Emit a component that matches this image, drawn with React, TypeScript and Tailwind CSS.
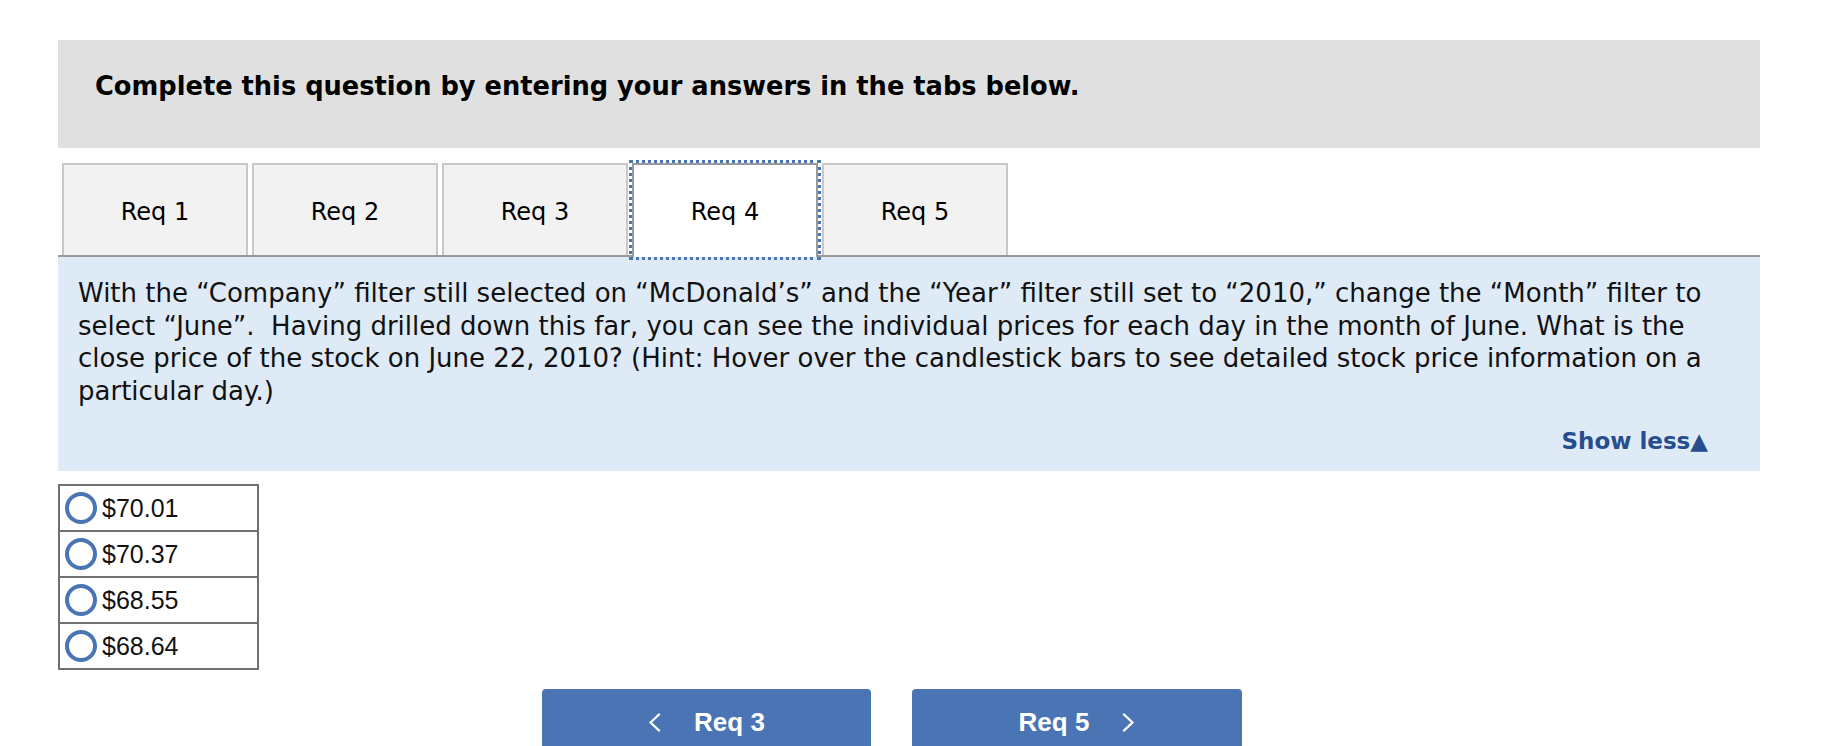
import React from "react";

const verdana = { fontFamily: '"DejaVu Sans", Verdana, sans-serif' };
const arial = { fontFamily: '"Liberation Sans", Arial, sans-serif' };

function Chevron({ dir }: { dir: "left" | "right" }) {
  return (
    <svg width="13" height="19" viewBox="0 0 13 19" className="shrink-0">
      <polyline
        points={dir === "left" ? "11,1.5 2.5,9.5 11,17.5" : "2,1.5 10.5,9.5 2,17.5"}
        fill="none"
        stroke="white"
        strokeWidth="2.4"
        strokeLinecap="round"
        strokeLinejoin="round"
      />
    </svg>
  );
}

export default function App() {
  const tabs = ["Req 1", "Req 2", "Req 3", "Req 4", "Req 5"];
  const options = ["$70.01", "$70.37", "$68.55", "$68.64"];
  return (
    <div className="min-h-screen bg-white pt-[40px]">
      <div className="ml-[58px] w-[1702px] text-black" style={verdana}>
        <div className="h-[108px] bg-[#e0e0e0] pl-[37px] pt-[30px]">
          <div className="text-[25.7px] font-bold leading-[32px] text-black">
            Complete this question by entering your answers in the tabs below.
          </div>
        </div>

        <div className="mt-[15px] flex border-b-2 border-[#999999]">
          {tabs.map((t, i) => {
            const active = i === 3;
            return (
              <div
                key={t}
                className={
                  active
                    ? "relative z-10 ml-[4px] -mb-[2px] flex h-[94px] w-[186px] items-center justify-center border-2 border-b-0 border-[#999999] bg-white pt-[2px] text-[24px] outline-3 outline-dotted outline-[#4a75b5]"
                    : "ml-[4px] flex h-[92px] w-[186px] items-center justify-center border-2 border-b-0 border-[#c8c8c8] bg-[#f2f2f2] pt-[4px] text-[24px]"
                }
              >
                {t}
              </div>
            );
          })}
        </div>

        <div className="bg-[#dfeaf7] pb-[14px] pl-[20px] pr-[20px] pt-[20px]">
          <p className="text-[26px] leading-[32.5px] text-[#111]">
            With the “Company” filter still selected on “McDonald’s” and the “Year” filter still set to “2010,” change the “Month” filter to select “June”.{"\u00a0"} Having drilled down this far, you can see the individual prices for each day in the month of June. What is the close price of the stock on June 22, 2010? (Hint: Hover over the candlestick bars to see detailed stock price information on a particular day.)
          </p>
          <div className="mt-[18px] flex justify-end pr-[32px]">
            <span className="text-[23px] font-bold leading-[32px] text-[#264d8c]">
              Show less▲
            </span>
          </div>
        </div>

        <div className="mt-[13px] w-[201px] border-2 border-[#707070]" style={arial}>
          {options.map((o, i) => (
            <div
              key={o}
              className={
                i === 0
                  ? "flex h-[44px] items-center"
                  : "flex h-[46px] items-center border-t-2 border-[#707070]"
              }
            >
              <span className="ml-[5px] h-[32px] w-[32px] shrink-0 rounded-full border-4 border-[#4a75b5]" />
              <span className="ml-[5px] text-[25px] leading-none text-[#111]">{o}</span>
            </div>
          ))}
        </div>

        <div className="mt-[19px] flex pl-[484px]" style={arial}>
          <div className="flex h-[66px] w-[329px] items-center justify-center gap-[33px] rounded-t-[4px] bg-[#4a74b3] text-[26px] font-bold text-white">
            <Chevron dir="left" />
            <span>Req 3</span>
          </div>
          <div className="ml-[41px] flex h-[66px] w-[330px] items-center justify-center gap-[33px] rounded-t-[4px] bg-[#4a74b3] text-[26px] font-bold text-white">
            <span>Req 5</span>
            <Chevron dir="right" />
          </div>
        </div>
      </div>
    </div>
  );
}
